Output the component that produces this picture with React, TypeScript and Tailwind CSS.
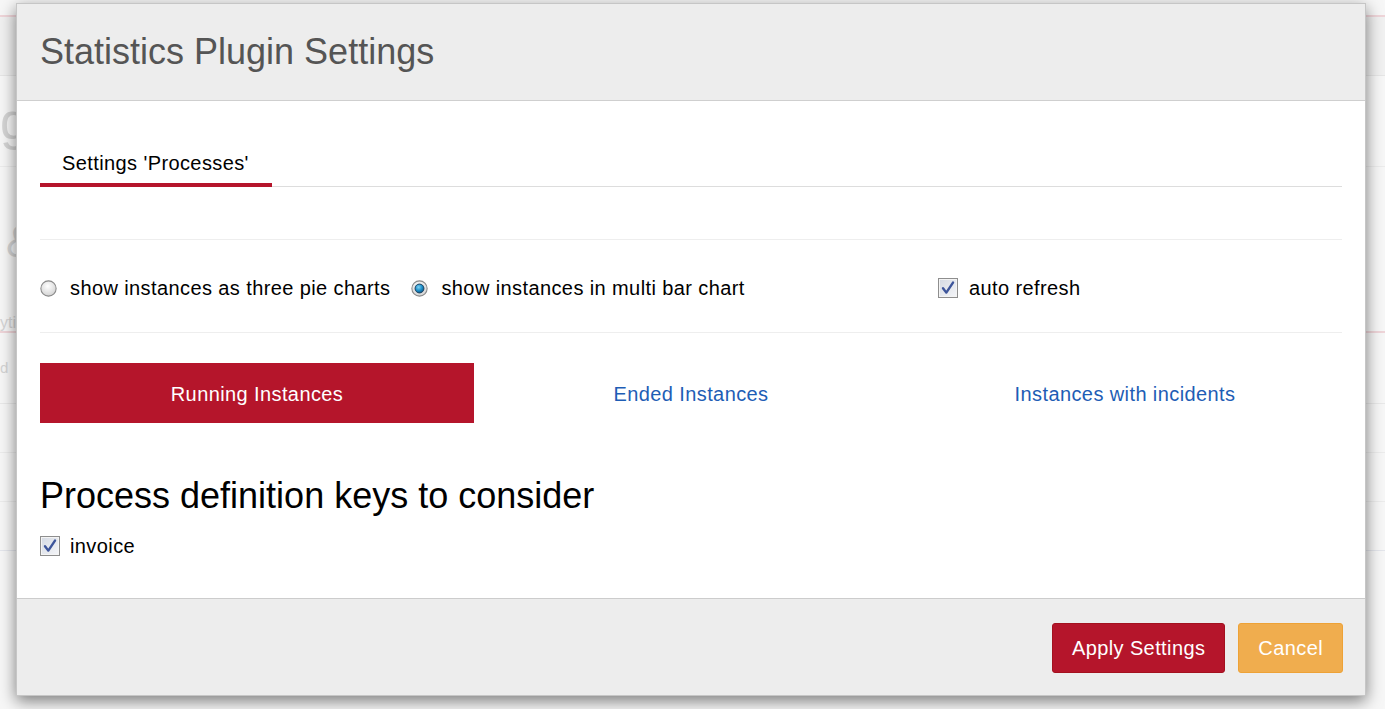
import { useState } from 'react';

type ViewMode = 'pie' | 'bar';
type InstanceTab = 'running' | 'ended' | 'incidents';

const INSTANCE_TABS: { key: InstanceTab; label: string }[] = [
  { key: 'running', label: 'Running Instances' },
  { key: 'ended', label: 'Ended Instances' },
  { key: 'incidents', label: 'Instances with incidents' },
];

function RadioMark({ checked }: { checked: boolean }) {
  return (
    <svg width="17" height="17" viewBox="0 0 16 16" className="shrink-0">
      <defs>
        <radialGradient id="radio-bg" cx="45%" cy="35%" r="70%">
          <stop offset="0%" stopColor="#ffffff" />
          <stop offset="100%" stopColor="#cfcfcf" />
        </radialGradient>
        <radialGradient id="radio-dot" cx="40%" cy="35%" r="70%">
          <stop offset="0%" stopColor="#7fd3f5" />
          <stop offset="55%" stopColor="#1d8fc9" />
          <stop offset="100%" stopColor="#0b4f7d" />
        </radialGradient>
      </defs>
      <circle cx="8" cy="8" r="7.2" fill="url(#radio-bg)" stroke="#8a8a8a" strokeWidth="1" />
      {checked ? <circle cx="8" cy="8" r="4.2" fill="url(#radio-dot)" stroke="#1c3f5c" strokeWidth="0.9" /> : null}
    </svg>
  );
}

function CheckMark() {
  return (
    <svg width="20" height="20" viewBox="0 0 20 20" className="shrink-0">
      <defs>
        <linearGradient id="check-bg" x1="0" y1="0" x2="1" y2="1">
          <stop offset="0%" stopColor="#d6dbe4" />
          <stop offset="100%" stopColor="#f3f4f7" />
        </linearGradient>
      </defs>
      <rect x="0.5" y="0.5" width="19" height="19" fill="#f4f4f4" stroke="#8e8e8e" />
      <rect x="2" y="2" width="16" height="16" fill="url(#check-bg)" />
      <path d="M5 10.2 L8.3 14.6 L15 4.6" fill="none" stroke="#3d559b" strokeWidth="2.4" strokeLinecap="round" strokeLinejoin="round" />
    </svg>
  );
}

function BackgroundPage() {
  return (
    <div className="min-h-[709px] bg-[#f7f7f7] text-[#d4d4d4]">
      <div className="h-[15px]" />
      <div className="h-[2px] bg-[#efd5d9]" />
      <div className="h-[58px] bg-[#f1f1f1]" />
      <div className="h-px bg-[#e6e6e6]" />
      <div className="flex h-[90px] items-center text-[52px] leading-none">g</div>
      <div className="h-px bg-[#ececec]" />
      <div className="flex h-[150px] items-center pl-[6px] text-[44px] leading-none">&amp;</div>
      <div className="h-[12px] text-[16px] leading-[12px]">yti</div>
      <div className="mt-[2px] h-[2px] bg-[#efd5d9]" />
      <div className="flex h-[70px] items-center text-[15px]">d</div>
      <div className="h-px bg-[#e9e9e9]" />
      <div className="h-[48px]" />
      <div className="h-px bg-[#ececec]" />
      <div className="h-[48px]" />
      <div className="h-px bg-[#ececec]" />
      <div className="h-[48px]" />
      <div className="h-px bg-[#e4e6ec]" />
    </div>
  );
}

export default function App() {
  const [mode, setMode] = useState<ViewMode>('bar');
  const [autoRefresh, setAutoRefresh] = useState(true);
  const [activeTab, setActiveTab] = useState<InstanceTab>('running');
  const [invoice, setInvoice] = useState(true);

  return (
    <div className="relative h-[709px] w-[1385px] overflow-hidden font-['Liberation_Sans',Arial,sans-serif]">
      <BackgroundPage />

      <div className="absolute left-[16px] top-[3px] w-[1350px] border border-[#c6c6c6] bg-white shadow-[0_5px_15px_rgba(0,0,0,0.5)]">
        <div className="flex h-[97px] items-center border-b border-[#cfcfcf] bg-[#ededed] px-[23px]">
          <h1 className="text-[36px] leading-[40px] text-[#555555]">Statistics Plugin Settings</h1>
        </div>

        <div className="px-[23px] pt-[38px] text-[20px] tracking-[0.4px] text-black">
          <div className="flex border-b border-[#dddddd]">
            <div className="-mb-px border-b-4 border-[#b5152b] pb-[6px] pl-[22px] pr-[23px] pt-[10px] leading-[28px]">
              Settings 'Processes'
            </div>
          </div>

          <div className="mt-[52px] h-px bg-[#eeeeee]" />

          <div className="flex items-center pb-[30px] pt-[34px] leading-[28px]">
            <div className="flex w-[898px] items-center gap-[21px]">
              <label className="flex cursor-pointer items-center gap-[13px]" onClick={() => setMode('pie')}>
                <RadioMark checked={mode === 'pie'} />
                <span>show instances as three pie charts</span>
              </label>
              <label className="flex cursor-pointer items-center gap-[13px]" onClick={() => setMode('bar')}>
                <RadioMark checked={mode === 'bar'} />
                <span>show instances in multi bar chart</span>
              </label>
            </div>
            <label className="flex cursor-pointer items-center gap-[11px]" onClick={() => setAutoRefresh(v => !v)}>
              {autoRefresh ? <CheckMark /> : <span className="h-[20px] w-[20px] border border-[#8e8e8e] bg-[#f4f4f4]" />}
              <span>auto refresh</span>
            </label>
          </div>

          <div className="h-px bg-[#eeeeee]" />

          <div className="mt-[30px] grid grid-cols-3">
            {INSTANCE_TABS.map(tab => (
              <button
                key={tab.key}
                type="button"
                onClick={() => setActiveTab(tab.key)}
                className={
                  activeTab === tab.key
                    ? 'flex h-[60px] items-center justify-center pt-[2px] bg-[#b5152b] text-white'
                    : 'flex h-[60px] items-center justify-center pt-[2px] text-[#1e5db5]'
                }
              >
                {tab.label}
              </button>
            ))}
          </div>

          <h2 className="mt-[53px] text-[36px] leading-[40px] tracking-normal">Process definition keys to consider</h2>

          <label className="mt-[16px] flex cursor-pointer items-center gap-[10px] leading-[28px]" onClick={() => setInvoice(v => !v)}>
            {invoice ? <CheckMark /> : <span className="h-[20px] w-[20px] border border-[#8e8e8e] bg-[#f4f4f4]" />}
            <span>invoice</span>
          </label>
          <div className="h-[38px]" />
        </div>

        <div className="flex h-[97px] items-start justify-end gap-[13px] border-t border-[#cccccc] bg-[#ededed] px-[22px] pt-[24px] text-[20px] tracking-[0.4px]">
          <button type="button" className="h-[50px] rounded-[3px] border border-[#a3111f] bg-[#b5152b] px-[19px] text-white">
            Apply Settings
          </button>
          <button type="button" className="h-[50px] rounded-[3px] border border-[#eea236] bg-[#f0ad4e] px-[19px] text-white">
            Cancel
          </button>
        </div>
      </div>
    </div>
  );
}
